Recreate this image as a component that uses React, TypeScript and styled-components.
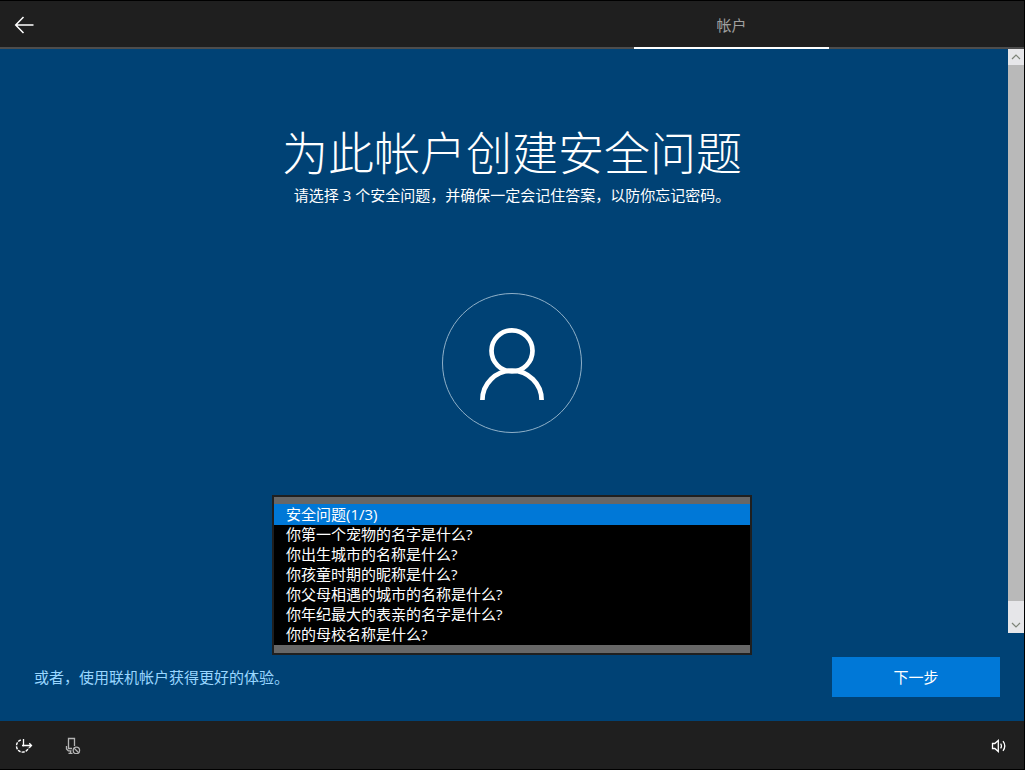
import React, { useState } from "react";
import styled, { createGlobalStyle } from "styled-components";

const Global = createGlobalStyle`
  *, *::before, *::after { box-sizing: border-box; }
  body {
    margin: 0;
    background: #004275;
    color: #fff;
    font: 15px/20px "Open Sans", "Noto Sans CJK SC", sans-serif;
  }
  button, select { font: inherit; }
  button { margin: 0; padding: 0; border: 0; border-radius: 0; cursor: pointer; }
  svg { display: block; }
`;

const Page = styled.div`
  display: flex;
  flex-direction: column;
  min-height: 100vh;
  border: 1px solid #000;
  border-left: 0;
`;

const Header = styled.header`
  display: flex;
  justify-content: space-between;
  height: 48px;
  padding-right: 195px;
  background: #1f1f1f;
  box-shadow: inset 0 -2px #4d4d4d;
`;

const IconButton = styled.button`
  display: flex;
  align-items: center;
  justify-content: center;
  width: 48px;
  height: 48px;
  background: transparent;
  color: ${(p) => p.color ?? "#fff"};
`;

const Tab = styled.a`
  flex: 0 0 195px;
  padding-top: 14px;
  border-bottom: 2px solid #fff;
  color: #a0a0a0;
  text-align: center;
  text-decoration: none;
`;

const Body = styled.div`
  display: grid;
  grid-template-columns: 1fr 16px;
  flex: 1;
`;

const Main = styled.main`
  display: flex;
  flex-direction: column;
  align-items: center;
  padding: 72px 0 0 16px;
`;

const Title = styled.h1`
  margin: 0;
  font-size: 46px;
  font-weight: 300;
  line-height: 62px;
`;

const Subtitle = styled.p`
  margin: 2px 0 88px;
`;

const Field = styled.div`
  position: relative;
  width: 100%;
  max-width: 480px;
  height: 32px;
  margin-top: 62px;
`;

const QuestionList = styled.select`
  position: absolute;
  inset: 0 0 auto;
  width: 100%;
  height: 160px;
  padding: 7px 0 8px;
  border: 2px solid #1f1f1f;
  border-radius: 0;
  outline: 0;
  background: #000 linear-gradient(#676767, #676767) top / 100% 7px no-repeat;
  box-shadow: inset 0 -8px #676767;
  color: #fff;
  overflow: hidden;
  z-index: 1;
`;

const Question = styled.option`
  display: flex;
  align-items: flex-end;
  height: 20px;
  min-height: 20px;
  padding: 0 12px 1px;
  -webkit-text-fill-color: #fff;

  &:first-child {
    height: 21px;
  }
  &:checked {
    background: linear-gradient(#0078d7, #0078d7);
  }
`;

const ScrollBar = styled.div`
  display: flex;
  flex-direction: column;
  background: #e6e6e9;
  color: #7e8478;
`;

const ScrollButton = styled.button`
  display: flex;
  align-items: center;
  justify-content: center;
  height: 16px;
  background: #e6e6e9;
  color: inherit;
`;

const ScrollThumb = styled.div`
  flex: 1;
  margin-bottom: 16px;
  background: #b9b9b9;
`;

const Actions = styled.div`
  display: flex;
  align-items: center;
  justify-content: space-between;
  padding: 24px 24px 24px 34px;
`;

const OnlineLink = styled.a`
  color: #99d6ff;
  text-decoration: none;
`;

const NextButton = styled.button`
  width: 168px;
  height: 40px;
  background: #0078d7;
  color: #fff;
`;

const Footer = styled.footer`
  display: flex;
  height: 48px;
  background: #1f1f1f;
`;

const FooterTools = styled.div`
  display: flex;
  flex: 1;
`;

const Volume = styled(IconButton)`
  width: 52px;
`;

const questions = [
  "安全问题(1/3)",
  "你第一个宠物的名字是什么?",
  "你出生城市的名称是什么?",
  "你孩童时期的昵称是什么?",
  "你父母相遇的城市的名称是什么?",
  "你年纪最大的表亲的名字是什么?",
  "你的母校名称是什么?",
];

const BackIcon = () => (
  <svg width="20" height="20" viewBox="0 0 20 20" fill="none" stroke="currentColor" strokeWidth="1.5" aria-hidden="true">
    <path d="M9.5 2 L1.7 10 L9.5 18 M1.7 10 H19.5" />
  </svg>
);

const UserIcon = () => (
  <svg width="140" height="140" viewBox="0 0 140 140" fill="none" stroke="#fff" aria-hidden="true">
    <circle cx="70" cy="70" r="69.5" stroke="#8fb0c8" />
    <circle cx="70" cy="57.8" r="20.5" strokeWidth="4.7" />
    <path d="M40.4 107 A29.6 29.4 0 0 1 99.6 107" strokeWidth="4.7" />
  </svg>
);

const AccessIcon = () => (
  <svg width="18" height="18" viewBox="0 0 18 18" fill="none" stroke="currentColor" strokeWidth="1.4" aria-hidden="true">
    <path d="M8.5 3 V10.5 M7 9.5 H16.5 M14.3 7.3 L16.5 9.5 L14.3 11.7" strokeWidth="1.3" />
    <path d="M5.8 4 A6.2 6.2 0 1 0 13.6 11.7" strokeDasharray="3 1.1" />
  </svg>
);

const MicOffIcon = () => (
  <svg width="18" height="18" viewBox="0 0 18 18" fill="none" stroke="currentColor" strokeWidth="1.3" aria-hidden="true">
    <path d="M11.5 10 V2.5 H5.5 V12.5 H9" />
    <path d="M3.5 10 V13 L5.3 14.8 H8.5 M7.5 14.8 V17.3 M5.5 17.3 H9.5" />
    <circle cx="13.4" cy="14.4" r="3.2" />
    <path d="M11.1 12.1 L15.7 16.7" />
  </svg>
);

const VolumeIcon = () => (
  <svg width="18" height="18" viewBox="0 0 18 18" fill="none" stroke="currentColor" strokeWidth="1.3" aria-hidden="true">
    <path d="M3.5 7.5 H5.8 L9.3 4.4 V15.6 L5.8 12.5 H3.5 Z" />
    <path d="M11.6 7.6 Q13.3 10 11.6 12.4 M14 5.2 Q17.6 10 14 14.8" />
  </svg>
);

const Chevron = ({ down }: { down?: boolean }) => (
  <svg width="10" height="6" viewBox="0 0 10 6" fill="none" stroke="currentColor" strokeWidth="1.2" aria-hidden="true">
    <path d={down ? "M1 1 L5 5 L9 1" : "M1 5 L5 1 L9 5"} />
  </svg>
);

export default function App() {
  const [question, setQuestion] = useState(questions[0]);

  return (
    <Page>
      <Global />
      <Header>
        <IconButton type="button" aria-label="返回">
          <BackIcon />
        </IconButton>
        <Tab href="#account" aria-current="page">帐户</Tab>
      </Header>
      <Body>
        <Main>
          <Title>为此帐户创建安全问题</Title>
          <Subtitle>请选择 3 个安全问题，并确保一定会记住答案，以防你忘记密码。</Subtitle>
          <UserIcon />
          <Field>
            <QuestionList
              aria-label="安全问题"
              size={7}
              value={question}
              onChange={(e) => setQuestion(e.target.value)}
            >
              {questions.map((q) => (
                <Question key={q} value={q}>{q}</Question>
              ))}
            </QuestionList>
          </Field>
        </Main>
        <ScrollBar>
          <ScrollButton type="button" aria-label="向上滚动">
            <Chevron />
          </ScrollButton>
          <ScrollThumb />
          <ScrollButton type="button" aria-label="向下滚动">
            <Chevron down />
          </ScrollButton>
        </ScrollBar>
      </Body>
      <Actions>
        <OnlineLink href="#online">或者，使用联机帐户获得更好的体验。</OnlineLink>
        <NextButton type="button">下一步</NextButton>
      </Actions>
      <Footer>
        <FooterTools>
          <IconButton type="button" aria-label="轻松使用">
            <AccessIcon />
          </IconButton>
          <IconButton type="button" aria-label="麦克风已关闭" color="#b4b4b4">
            <MicOffIcon />
          </IconButton>
        </FooterTools>
        <Volume type="button" aria-label="音量">
          <VolumeIcon />
        </Volume>
      </Footer>
    </Page>
  );
}
